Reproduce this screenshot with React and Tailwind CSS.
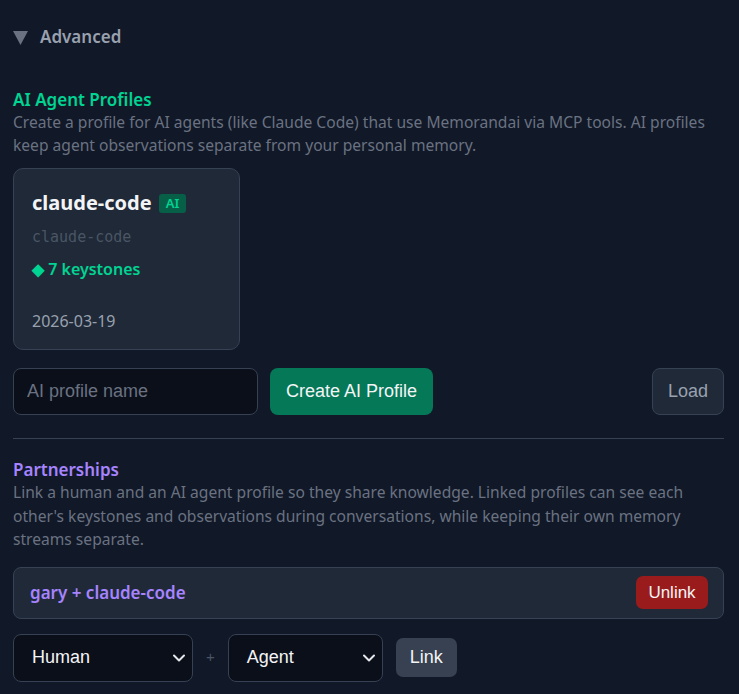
import React from "react";

const sans = "font-['Noto_Sans','Open_Sans',sans-serif]";
const arial = "font-['Liberation_Sans',Arial,sans-serif]";

function Chevron() {
  return (
    <svg width="16" height="16" viewBox="0 0 16 16" fill="none" stroke="currentColor" strokeWidth="2" strokeLinecap="round" strokeLinejoin="round">
      <path d="M3 5.5 L8 10.5 L13 5.5" />
    </svg>
  );
}

export default function App() {
  return (
    <div className={`min-h-[694px] w-[739px] bg-[#111827] pl-[13px] pr-[15px] ${sans}`}>
      <div className="flex items-center gap-[12px] pt-[27px] h-[45px]">
        <svg width="15" height="15" viewBox="0 0 15 15" className="text-gray-500 mt-[2px]">
          <path d="M0 1 L15 1 L7.5 15 Z" fill="currentColor" />
        </svg>
        <span className="text-[17px] font-semibold text-gray-400 leading-none">Advanced</span>
      </div>

      <div className="mt-[44px]">
        <h3 className="text-[17px] font-semibold text-emerald-400 leading-[22px]">AI Agent Profiles</h3>
        <p className="text-[15.6px] text-gray-500 leading-[23px]">
          Create a profile for AI agents (like Claude Code) that use Memorandai via MCP tools. AI profiles keep agent observations separate from your personal memory.
        </p>
      </div>

      <div className="mt-[11px] w-[227px] h-[182px] rounded-[10px] border border-gray-700 bg-[#1f2937] px-[18px] pt-[20px] flex flex-col">
        <div className="flex items-center gap-[7px]">
          <span className="text-[20px] font-bold text-gray-100 leading-[28px]">claude-code</span>
          <span className="rounded-[3px] bg-[#065f46] px-[7px] text-[13px] font-semibold text-emerald-400 leading-[19px]">AI</span>
        </div>
        <div className="mt-[10px] font-['DejaVu_Sans_Mono',monospace] text-[15px] text-gray-600 leading-[20px]">claude-code</div>
        <div className="mt-[12px] text-[16px] font-semibold text-emerald-400 leading-[20px]">◆ 7 keystones</div>
        <div className="mt-[32px] text-[16px] text-gray-400 leading-[20px]">2026-03-19</div>
      </div>

      <div className="mt-[18px] flex items-center">
        <input
          placeholder="AI profile name"
          className={`w-[245px] h-[47px] rounded-[8px] border border-gray-700 bg-[#0b0f19] px-[13px] text-[18px] text-gray-200 placeholder:text-gray-500 outline-none ${arial}`}
        />
        <button className={`ml-[12px] h-[47px] w-[163px] rounded-[8px] bg-[#047857] text-[18px] text-gray-100 ${arial}`}>Create AI Profile</button>
        <button className={`ml-auto h-[47px] w-[72px] rounded-[8px] border border-gray-700 bg-[#1f2937] text-[18px] text-gray-400 ${arial}`}>Load</button>
      </div>

      <div className="mt-[23px] border-t border-gray-700" />

      <div className="mt-[20px]">
        <h3 className="text-[17px] font-semibold text-violet-400 leading-[22px]">Partnerships</h3>
        <p className="text-[15.6px] text-gray-500 leading-[23.5px]">
          Link a human and an AI agent profile so they share knowledge. Linked profiles can see each other's keystones and observations during conversations, while keeping their own memory streams separate.
        </p>
      </div>

      <div className="mt-[15px] flex items-center justify-between h-[52px] rounded-[8px] border border-gray-700 bg-[#1f2937] pl-[16px] pr-[15px]">
        <span className="text-[17px] font-semibold text-violet-400">gary + claude-code</span>
        <button className={`h-[33px] w-[72px] rounded-[7px] bg-[#991b1b] text-[17px] text-gray-100 ${arial}`}>Unlink</button>
      </div>

      <div className="mt-[15px] flex items-center">
        <div className={`flex items-center justify-between w-[180px] h-[48px] rounded-[8px] border border-gray-700 bg-[#0b0f19] pl-[18px] pr-[5px] text-[18px] text-gray-100 ${arial}`}>
          <span>Human</span>
          <span className="text-gray-200"><Chevron /></span>
        </div>
        <span className={`mx-[13px] text-[15px] text-gray-600 ${arial}`}>+</span>
        <div className={`flex items-center justify-between w-[155px] h-[48px] rounded-[8px] border border-gray-700 bg-[#0b0f19] pl-[18px] pr-[5px] text-[18px] text-gray-100 ${arial}`}>
          <span>Agent</span>
          <span className="text-gray-200"><Chevron /></span>
        </div>
        <button className={`ml-[13px] h-[39px] w-[61px] rounded-[7px] bg-[#374151] text-[18px] text-gray-100 ${arial}`}>Link</button>
      </div>
    </div>
  );
}
